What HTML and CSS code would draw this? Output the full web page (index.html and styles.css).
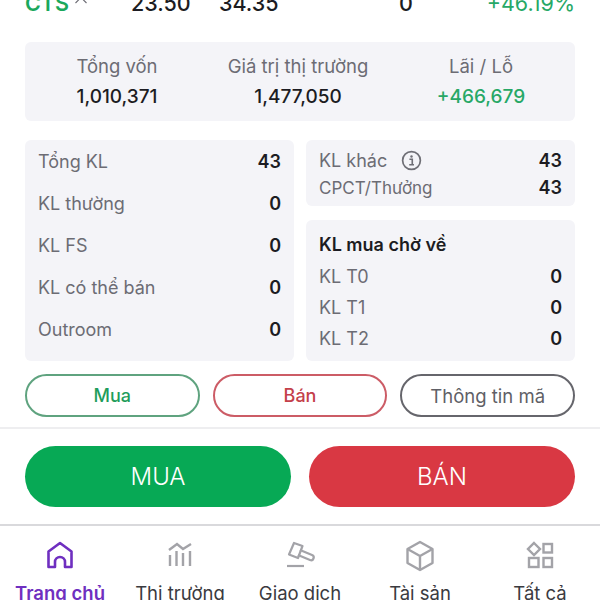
FILE: index.html
```html
<!DOCTYPE html>
<html lang="vi">
<head>
    <meta charset="utf-8">
    <link rel="stylesheet" href="styles.css">
</head>
<body>
    <div class="phone">
        <div class="stockRow">
            <div class="symbol">CTS <svg class="caret" width="14" height="8" viewBox="0 0 14 8"><path d="M1.5 7L7 1.5 12.500 7" fill="none" stroke="#6b6b73" stroke-width="1.1"/></svg></div>
            <div class="cellA">23.50</div>
            <div class="cellB">34.35</div>
            <div class="cellC">0</div>
            <div class="cellD">+46.19%</div>
        </div>

        <div class="summary">
            <div class="sumCol colA">
                <div class="sumLabel">Tổng vốn</div>
                <div class="sumValue">1,010,371</div>
            </div>
            <div class="sumCol colB">
                <div class="sumLabel">Giá trị thị trường</div>
                <div class="sumValue">1,477,050</div>
            </div>
            <div class="sumCol colC">
                <div class="sumLabel">Lãi / Lỗ</div>
                <div class="sumValue green">+466,679</div>
            </div>
        </div>

        <div class="panels">
            <div class="box leftBox">
                <div class="row"><span>Tổng KL</span><b>43</b></div>
                <div class="row"><span>KL thường</span><b>0</b></div>
                <div class="row"><span>KL FS</span><b>0</b></div>
                <div class="row"><span>KL có thể bán</span><b>0</b></div>
                <div class="row"><span>Outroom</span><b>0</b></div>
            </div>
            <div class="rightCol">
                <div class="box otherBox">
                    <div class="row"><span class="withIcon">KL khác
                        <svg width="21" height="21" viewBox="0 0 22 22"><circle cx="11" cy="11" r="9.300" fill="none" stroke="#6f6f76" stroke-width="1.800"/><circle cx="11" cy="6.800" r="1.300" fill="#6f6f76"/><path d="M8.800 9.700h3v5.600M8.600 15.500h5" fill="none" stroke="#6f6f76" stroke-width="1.700"/></svg>
                    </span><b>43</b></div>
                    <div class="row"><span class="small">CPCT/Thưởng</span><b>43</b></div>
                </div>
                <div class="box waitBox">
                    <div class="waitTitle">KL mua chờ về</div>
                    <div class="row"><span>KL T0</span><b>0</b></div>
                    <div class="row"><span>KL T1</span><b>0</b></div>
                    <div class="row"><span>KL T2</span><b>0</b></div>
                </div>
            </div>
        </div>

        <div class="pills">
            <div class="pill pillBuy">Mua</div>
            <div class="pill pillSell">Bán</div>
            <div class="pill pillInfo">Thông tin mã</div>
        </div>

        <div class="actions">
            <div class="action actionBuy">MUA</div>
            <div class="action actionSell">BÁN</div>
        </div>

        <div class="tabBar">
            <div class="tab active">
                <svg width="32" height="32" viewBox="0 0 32 32" fill="none" stroke="#6f2fc0" stroke-width="2.600" stroke-linejoin="round"><path d="M4.500 11.500L16 3l11.500 8.500V27H21v-5a5 5 0 0 0-10 0v5H4.500z"/></svg>
                <span>Trang chủ</span>
            </div>
            <div class="tab">
                <svg width="32" height="32" viewBox="0 0 32 32" fill="none" stroke="#a3a3a8" stroke-width="2.400"><path d="M5 10l8-6 6 5 8-5"/><path d="M6 26V15M12.500 26V11M19 26V13M26 26V11"/></svg>
                <span>Thị trường</span>
            </div>
            <div class="tab">
                <svg width="32" height="32" viewBox="0 0 32 32" fill="none" stroke="#a3a3a8" stroke-width="2.200" stroke-linejoin="round"><path d="M10 3l8.500 3-4.500 12-9-3.500z"/><path d="M16 10l12 5a2.500 2.500 0 0 1-2 5l-12-5"/><path d="M3 26h17"/></svg>
                <span>Giao dịch</span>
            </div>
            <div class="tab">
                <svg width="32" height="32" viewBox="0 0 32 32" fill="none" stroke="#a3a3a8" stroke-width="2.400" stroke-linejoin="round"><path d="M16 2l12.500 7v14L16 30 3.500 23V9z"/><path d="M3.500 9L16 16l12.500-7M16 16v14"/></svg>
                <span>Tài sản</span>
            </div>
            <div class="tab">
                <svg width="32" height="32" viewBox="0 0 32 32" fill="none" stroke="#a3a3a8" stroke-width="2.400"><path d="M10 3l6 6-6 6-6-6z"/><rect x="19.500" y="4" width="8.500" height="8.500"/><rect x="5" y="18" width="9.500" height="9"/><rect x="19.500" y="18" width="8.500" height="9"/></svg>
                <span>Tất cả</span>
            </div>
        </div>
    </div>
</body>
</html>
```

FILE: styles.css
```css
html, body {
    margin: 0;
    padding: 0;
}
body {
    width: 600px;
    height: 600px;
    overflow: hidden;
    background: #fff;
    font-family: Inter, "Liberation Sans", sans-serif;
    color: #1c1c22;
}
.phone {
    display: flex;
    flex-direction: column;
    height: 600px;
    overflow: hidden;
}
.phone > div {
    flex: none;
}

.stockRow {
    display: flex;
    align-items: center;
    height: 20px;
    margin-top: -7px;
    padding: 0 25px;
    font-size: 21.500px;
    font-weight: 500;
}
.symbol {
    width: 106px;
    color: #1aa85c;
    font-weight: 600;
}
.caret {
    vertical-align: 7px;
}
.cellA {
    width: 88px;
}
.cellB {
    width: 120px;
}
.cellC {
    width: 74px;
    text-align: right;
}
.cellD {
    flex: 1;
    text-align: right;
    color: #27a866;
    font-weight: 400;
}

.summary {
    display: flex;
    height: 79px;
    margin: 29px 25px 0;
    background: #f4f4f8;
    border-radius: 6px;
    box-sizing: border-box;
    padding-top: 13px;
}
.sumCol {
    text-align: center;
}
.colA {
    width: 184px;
}
.colB {
    width: 178px;
}
.colC {
    width: 188px;
}
.sumLabel {
    font-size: 18.500px;
    line-height: 22px;
    color: #6c6c74;
}
.sumValue {
    font-size: 19px;
    line-height: 22px;
    margin-top: 9px;
    font-weight: 500;
}
.green {
    color: #27a866;
}

.panels {
    display: flex;
    gap: 12px;
    margin: 19px 25px 0;
    height: 221px;
}
.box {
    background: #f4f4f8;
    border-radius: 6px;
    box-sizing: border-box;
}
.leftBox {
    width: 269px;
    padding: 0 13px;
}
.leftBox .row {
    height: 42px;
}
.row {
    display: flex;
    justify-content: space-between;
    align-items: center;
    font-size: 18px;
    color: #6c6c74;
}
.row b {
    color: #1c1c22;
    font-weight: 600;
}
.small {
    font-size: 17px;
}
.rightCol {
    flex: 1;
    display: flex;
    flex-direction: column;
    gap: 14px;
}
.otherBox {
    height: 66px;
    padding: 7px 13px 0;
}
.otherBox .row {
    height: 27px;
}
.withIcon {
    display: flex;
    align-items: center;
    gap: 14px;
}
.waitBox {
    flex: 1;
    padding: 13px 13px 0;
}
.waitTitle {
    font-size: 18px;
    line-height: 24px;
    font-weight: 600;
    margin-bottom: 4px;
}
.waitBox .row {
    height: 31px;
}

.pills {
    display: flex;
    gap: 13px;
    margin: 13px 25px 0;
}
.pill {
    flex: 1;
    height: 43px;
    box-sizing: border-box;
    border-radius: 22px;
    border: 2px solid;
    display: flex;
    align-items: center;
    justify-content: center;
    font-size: 18px;
}
.pillBuy {
    border-color: #5fa37f;
    color: #1f9d5c;
    font-weight: 500;
}
.pillSell {
    border-color: #cc5c66;
    color: #c4404a;
    font-weight: 500;
}
.pillInfo {
    border-color: #66666c;
    color: #5f5f66;
    font-size: 18.500px;
}

.actions {
    display: flex;
    gap: 18px;
    margin-top: 10px;
    padding: 17px 25px 0;
    border-top: 2px solid #eeeef0;
}
.action {
    flex: 1;
    height: 61px;
    border-radius: 31px;
    display: flex;
    align-items: center;
    justify-content: center;
    color: #fff;
    font-size: 24px;
    font-weight: 300;
}
.actionBuy {
    background: #07a955;
}
.actionSell {
    background: #d93843;
}

.tabBar {
    display: flex;
    margin-top: 17px;
    padding-top: 14px;
    border-top: 2px solid #d9d9dc;
}
.tab {
    flex: 1;
    display: flex;
    flex-direction: column;
    align-items: center;
    gap: 10px;
    font-size: 18.500px;
    line-height: 22px;
    color: #3a3a40;
    white-space: nowrap;
}
.tab.active {
    color: #6f2fc0;
    font-weight: 600;
}
```
